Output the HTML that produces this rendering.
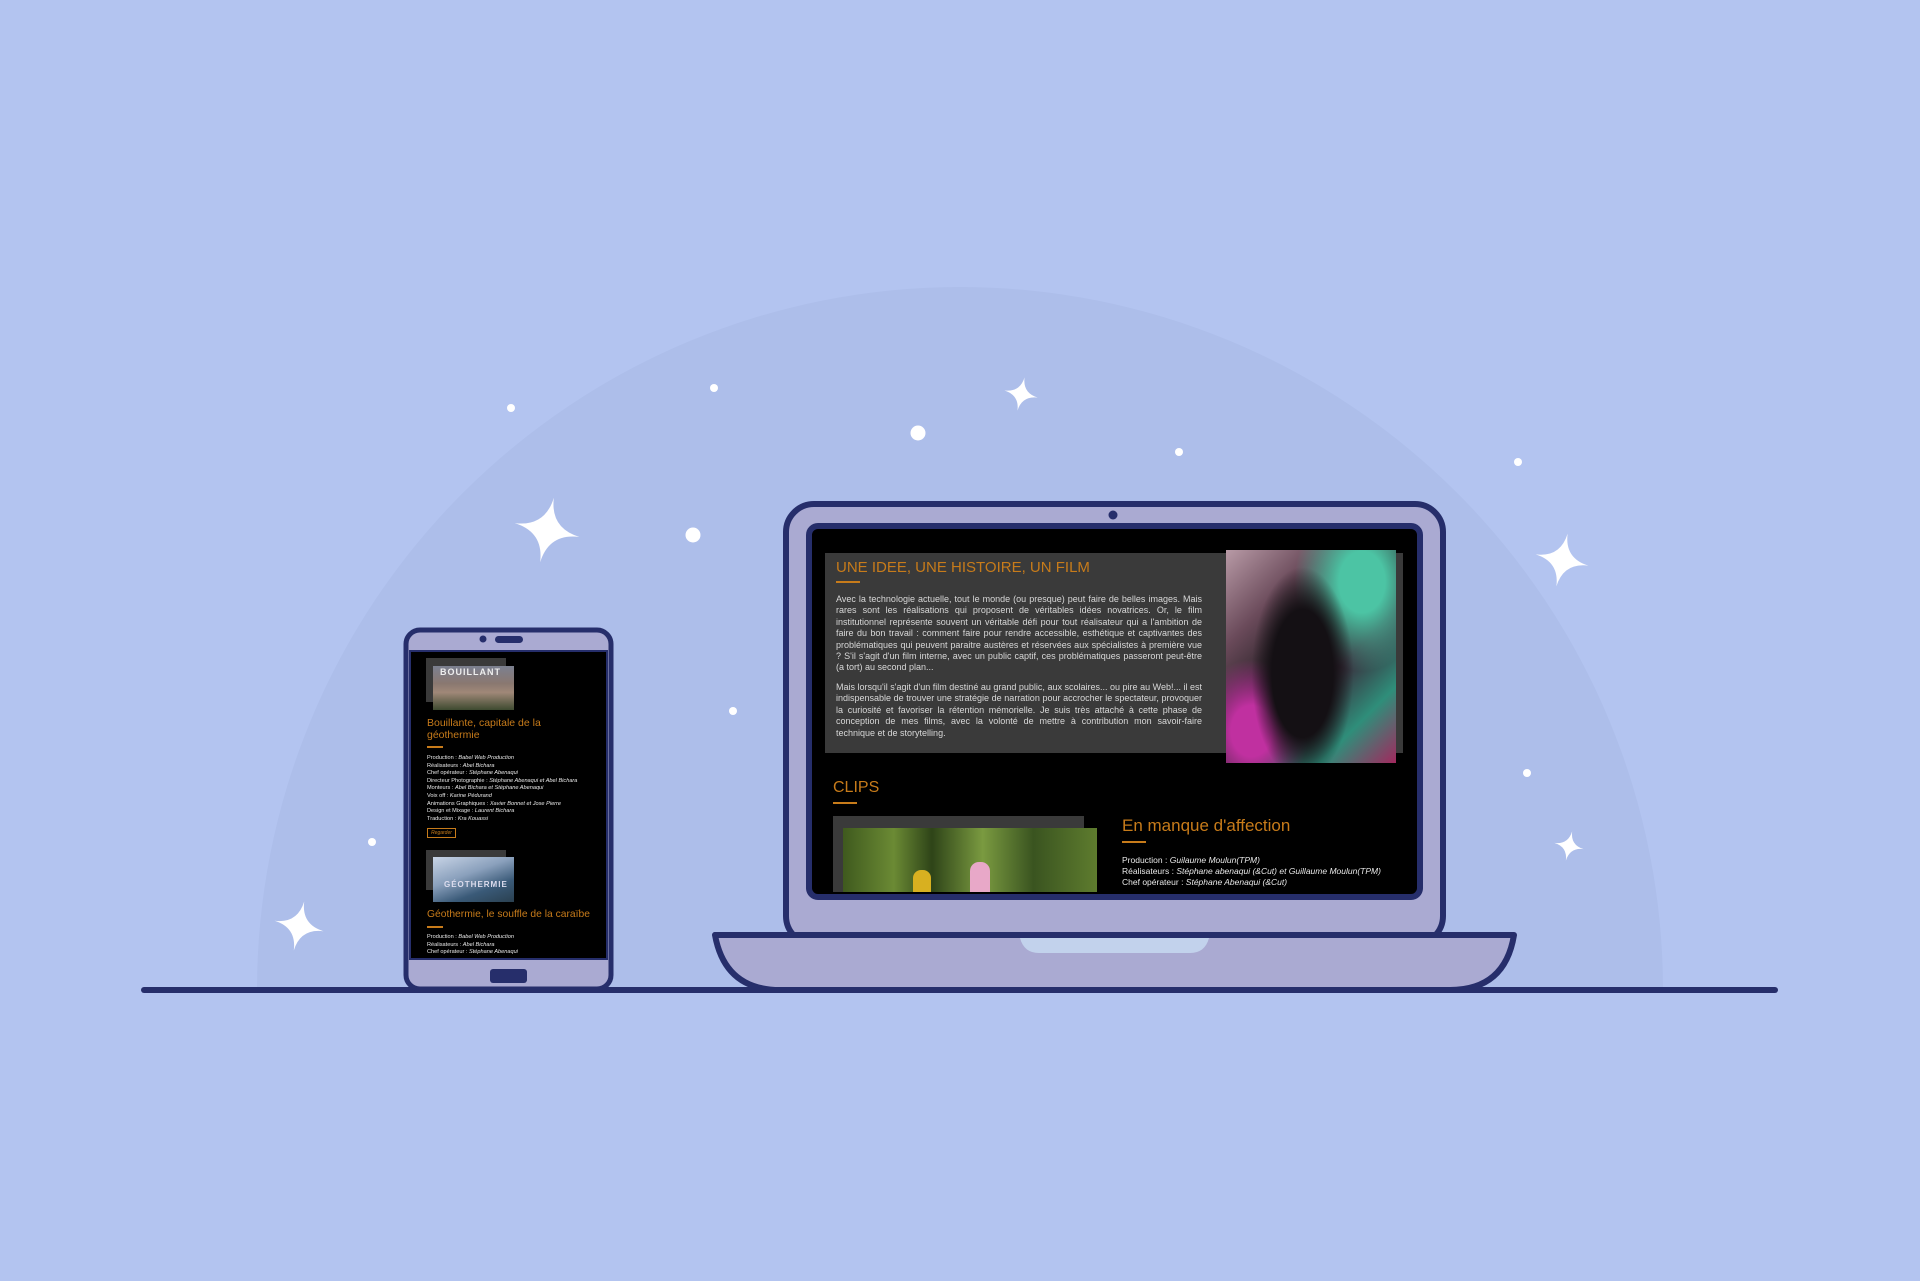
<!DOCTYPE html>
<html style="width:1920px;height:1281px;overflow:hidden"><head><meta charset="utf-8"><style>
*{margin:0;padding:0;box-sizing:border-box}
body{width:1920px;height:1281px;background:#b3c4f0;position:relative;overflow:hidden;font-family:"Liberation Sans",sans-serif}
.a{position:absolute}
.or{color:#c77b1a}
.p{color:#d8d8d8;font-size:9px;line-height:11.4px;text-align:justify}
.c{color:#e8e8e8;font-size:5.6px;line-height:7.6px;white-space:nowrap}
.c i{font-style:italic}
</style></head><body>
<div class="a" style="left:0;top:0;width:1920px;height:993px;overflow:hidden">
<div class="a" style="left:257px;top:287px;width:1406px;height:1406px;border-radius:50%;background:#adbeea"></div>
</div>

<svg class="a" style="left:0;top:0" width="1920" height="1281">
<defs><path id="st" d="M0,-1 Q0.08,-0.08 1,0 Q0.08,0.08 0,1 Q-0.08,0.08 -1,0 Q-0.08,-0.08 0,-1Z" fill="#fff"/></defs>
<use href="#st" transform="translate(547,530) rotate(12) scale(33)"/>
<use href="#st" transform="translate(1021,394) rotate(12) scale(17)"/>
<use href="#st" transform="translate(1562,560) rotate(12) scale(27)"/>
<use href="#st" transform="translate(1569,846) rotate(12) scale(15)"/>
<use href="#st" transform="translate(299,926) rotate(12) scale(25)"/>
<g fill="#fff">
<circle cx="511" cy="408" r="4"/><circle cx="714" cy="388" r="4"/><circle cx="918" cy="433" r="7.5"/>
<circle cx="1179" cy="452" r="4"/><circle cx="693" cy="535" r="7.5"/><circle cx="733" cy="711" r="4"/>
<circle cx="372" cy="842" r="4"/><circle cx="1518" cy="462" r="4"/><circle cx="1527" cy="773" r="4"/>
</g>
<rect x="786" y="504" width="657" height="440" rx="28" fill="#aaaad2" stroke="#262e6b" stroke-width="6"/>
<circle cx="1113" cy="515" r="4.5" fill="#262e6b"/>
<rect x="809" y="526" width="611" height="371" rx="9" fill="#000" stroke="#262e6b" stroke-width="6"/>
<path d="M715,935 L1514,935 Q1505,990 1450,990 L780,990 Q725,990 715,935Z" fill="#aaaad2" stroke="#262e6b" stroke-width="6" stroke-linejoin="round"/>
<path d="M1020,938 L1209,938 Q1205,953 1190,953 L1039,953 Q1024,953 1020,938Z" fill="#c2d2ec"/>
<rect x="141" y="987" width="1637" height="6" rx="3" fill="#262e6b"/>
<rect x="406" y="630" width="205" height="359" rx="14" fill="#aaaad2" stroke="#262e6b" stroke-width="5"/>
<rect x="410" y="651" width="197" height="308" fill="#000" stroke="#262e6b" stroke-width="2"/>
<circle cx="483" cy="639" r="3.5" fill="#262e6b"/>
<rect x="495" y="636" width="28" height="7" rx="3.5" fill="#262e6b"/>
<rect x="490" y="969" width="37" height="14" rx="3" fill="#262e6b"/>
</svg>

<div class="a" style="left:825px;top:553px;width:578px;height:200px;background:#3a3a3a"></div>
<div class="a or" style="left:836px;top:559px;font-size:15px">UNE IDEE, UNE HISTOIRE, UN FILM</div>
<div class="a" style="left:836px;top:581px;width:24px;height:2px;background:#c77b1a"></div>
<div class="a p" style="left:836px;top:594px;width:366px">Avec la technologie actuelle, tout le monde (ou presque) peut faire de belles images. Mais rares sont les réalisations qui proposent de véritables idées novatrices. Or, le film institutionnel représente souvent un véritable défi pour tout réalisateur qui a l'ambition de faire du bon travail : comment faire pour rendre accessible, esthétique et captivantes des problématiques qui peuvent paraitre austères et réservées aux spécialistes à première vue ? S'il s'agit d'un film interne, avec un public captif, ces problématiques passeront peut-être (a tort) au second plan...</div>
<div class="a p" style="left:836px;top:682px;width:366px">Mais lorsqu'il s'agit d'un film destiné au grand public, aux scolaires... ou pire au Web!... il est indispensable de trouver une stratégie de narration pour accrocher le spectateur, provoquer la curiosité et favoriser la rétention mémorielle. Je suis très attaché à cette phase de conception de mes films, avec la volonté de mettre à contribution mon savoir-faire technique et de storytelling.</div>
<div class="a" style="left:1226px;top:550px;width:170px;height:213px;background:linear-gradient(135deg,#b89aa6 0%,#6a4a5a 25%,#2a2228 45%,#3a2a3a 60%,#2f8e7a 80%,#a2285e 100%)"></div>
<div class="a" style="left:1226px;top:550px;width:170px;height:213px;background:radial-gradient(ellipse 30% 50% at 45% 58%,#141014 0 60%,transparent 100%),radial-gradient(ellipse at 80% 15%,#4cc4a4 0 12%,transparent 35%),radial-gradient(ellipse at 15% 85%,#c030a0 0 10%,transparent 28%)"></div>
<div class="a or" style="left:833px;top:779px;font-size:16px">CLIPS</div>
<div class="a" style="left:833px;top:802px;width:24px;height:2px;background:#c77b1a"></div>
<div class="a" style="left:833px;top:816px;width:251px;height:76px;background:#3a3a3a"></div>
<div class="a" style="left:843px;top:828px;width:254px;height:64px;background:linear-gradient(90deg,#3f5a1e,#6b8a34 20%,#2e4418 35%,#7a9a40 55%,#3a5420 75%,#5e7c2e)"></div>
<div class="a" style="left:913px;top:870px;width:18px;height:22px;background:#d8b020;border-radius:8px 8px 0 0"></div>
<div class="a" style="left:970px;top:862px;width:20px;height:30px;background:#e8a8c8;border-radius:9px 9px 0 0"></div>
<div class="a or" style="left:1122px;top:816px;font-size:17px">En manque d'affection</div>
<div class="a" style="left:1122px;top:841px;width:24px;height:2px;background:#c77b1a"></div>
<div class="a" style="left:1122px;top:855px;color:#e8e8e8;font-size:8.5px;line-height:11.2px;white-space:nowrap">Production : <i>Guilaume Moulun(TPM)</i><br>Réalisateurs : <i>Stéphane abenaqui (&amp;Cut) et Guillaume Moulun(TPM)</i><br>Chef opérateur : <i>Stéphane Abenaqui (&amp;Cut)</i></div>

<div class="a" style="left:426px;top:658px;width:80px;height:44px;background:#3a3a3a"></div>
<div class="a" style="left:433px;top:666px;width:81px;height:44px;background:linear-gradient(180deg,#7b8090 0%,#8a7870 40%,#a08878 60%,#3e4a30 100%)"></div>
<div class="a" style="left:440px;top:667px;color:#eee;font-size:9px;font-weight:bold;letter-spacing:1px">BOUILLANT</div>
<div class="a or" style="left:427px;top:717px;font-size:10.5px;line-height:12px;width:180px">Bouillante, capitale de la<br>géothermie</div>
<div class="a" style="left:427px;top:746px;width:16px;height:1.5px;background:#c77b1a"></div>
<div class="a c" style="left:427px;top:755px">Production : <i>Babel Web Production</i><br>Réalisateurs : <i>Abel Bichara</i><br>Chef opérateur : <i>Stéphane Abenaqui</i><br>Directeur Photographie : <i>Stéphane Abenaqui et Abel Bichara</i><br>Monteurs : <i>Abel Bichara et Stéphane Abenaqui</i><br>Voix off : <i>Karine Pédurand</i><br>Animations Graphiques : <i>Xavier Bonnet et Jose Pierre</i><br>Design et Mixage : <i>Laurent Bichara</i><br>Traduction : <i>Kra Kouassi</i></div>
<div class="a" style="left:427px;top:828px;width:29px;height:10px;border:1px solid #c77b1a;color:#c77b1a;font-size:5px;line-height:8px;text-align:center;font-style:italic">Regarder</div>
<div class="a" style="left:426px;top:850px;width:80px;height:40px;background:#3a3a3a"></div>
<div class="a" style="left:433px;top:857px;width:81px;height:45px;background:linear-gradient(160deg,#c8d4e6 0%,#8aa0bc 40%,#3a5a78 70%,#2a4050 100%)"></div>
<div class="a" style="left:444px;top:880px;color:#dde;font-size:8px;font-weight:bold;letter-spacing:1px">GÉOTHERMIE</div>
<div class="a or" style="left:427px;top:909px;font-size:10.3px;white-space:nowrap">Géothermie, le souffle de la caraïbe</div>
<div class="a" style="left:427px;top:926px;width:16px;height:1.5px;background:#c77b1a"></div>
<div class="a c" style="left:427px;top:934px">Production : <i>Babel Web Production</i><br>Réalisateurs : <i>Abel Bichara</i><br>Chef opérateur : <i>Stéphane Abenaqui</i></div>
</body></html>
